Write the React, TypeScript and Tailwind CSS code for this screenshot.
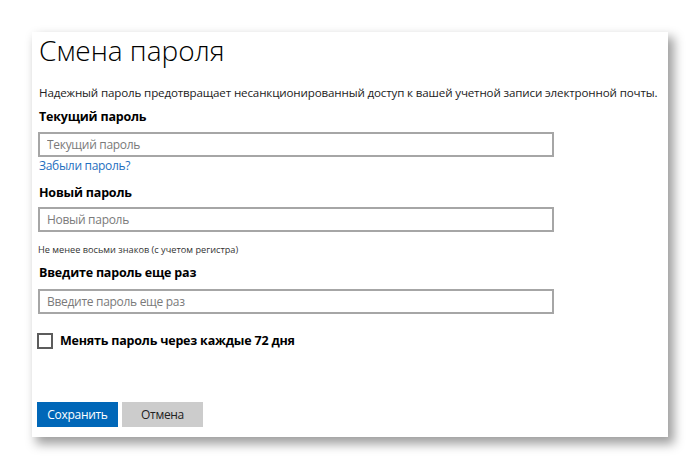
export default function App() {
  return (
    <div className="w-[700px] h-[469px] bg-white pt-[32px] pl-[32px] font-['Open_Sans',_sans-serif] text-[#222]">
      <div className="w-[636px] h-[405px] bg-white pl-[5px] shadow-[5px_6px_10px_1px_rgba(0,0,0,0.38)]">
        {/* --- Title --- */}
        <h1 className="ml-[2px] h-[40px] leading-[36px] text-[28px] font-light text-black">Смена пароля</h1>

        <p className="ml-[2px] mt-[12px] h-[18px] leading-[18px] text-[11.6px] tracking-[-0.15px] whitespace-nowrap">
          Надежный пароль предотвращает несанкционированный доступ к вашей учетной записи электронной почты.
        </p>

        {/* --- Current password --- */}
        <div className="ml-[2px] mt-[6px] h-[18px] leading-[18px] text-[12.5px] tracking-[-0.2px] font-bold text-black">
          Текущий пароль
        </div>
        <input
          type="password"
          placeholder="Текущий пароль"
          className="ml-px mt-[6px] block w-[516px] h-[25px] border-2 border-[#a6a6a6] px-[7px] text-[12px] tracking-[-0.3px] placeholder:text-[#7a7a7a] outline-none"
        />
        <div className="ml-[2px] h-[18px] leading-[18px] text-[12px] tracking-[-0.3px] text-[#1f6fc0]">Забыли пароль?</div>

        {/* --- New password --- */}
        <div className="ml-[2px] mt-[9px] h-[18px] leading-[18px] text-[12.5px] tracking-[-0.2px] font-bold text-black">
          Новый пароль
        </div>
        <input
          type="password"
          placeholder="Новый пароль"
          className="ml-px mt-[5px] block w-[516px] h-[25px] border-2 border-[#a6a6a6] px-[7px] text-[12px] tracking-[-0.3px] placeholder:text-[#7a7a7a] outline-none"
        />
        <div className="ml-[1px] mt-[10px] h-[16px] leading-[16px] text-[9.2px] text-[#333]">
          Не менее восьми знаков (с учетом регистра)
        </div>

        {/* --- Repeat password --- */}
        <div className="ml-[2px] mt-[6px] h-[18px] leading-[18px] text-[12.5px] tracking-[-0.2px] font-bold text-black">
          Введите пароль еще раз
        </div>
        <input
          type="password"
          placeholder="Введите пароль еще раз"
          className="ml-px mt-[7px] block w-[516px] h-[25px] border-2 border-[#a6a6a6] px-[7px] text-[12px] tracking-[-0.3px] placeholder:text-[#7a7a7a] outline-none"
        />

        {/* --- Checkbox --- */}
        <label className="mt-[19px] flex items-center gap-[7px] h-[16px]">
          <span className="w-[16px] h-[16px] border-2 border-[#5c5c5c] bg-white" />
          <span className="text-[12.5px] tracking-[-0.2px] font-bold text-black leading-[16px]">
            Менять пароль через каждые 72 дня
          </span>
        </label>

        {/* --- Buttons --- */}
        <div className="mt-[53px] flex gap-[4px]">
          <button className="w-[81px] h-[25px] bg-[#0067b8] text-white text-[12px] tracking-[-0.3px]">Сохранить</button>
          <button className="w-[81px] h-[25px] bg-[#cccccc] text-[#222] text-[12px] tracking-[-0.3px]">Отмена</button>
        </div>
      </div>
    </div>
  );
}
